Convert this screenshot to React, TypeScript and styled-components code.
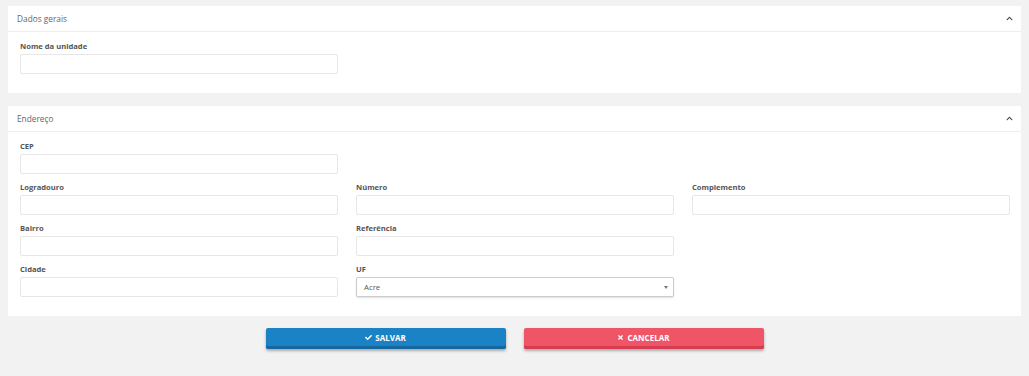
import React from "react";
import styled, {createGlobalStyle} from "styled-components";
import {FaCheck, FaTimes, FaChevronUp} from "react-icons/fa";

const GlobalStyle = createGlobalStyle`
  html, body {
    margin: 0;
    padding: 0;
    background: #f2f2f2;
    font-family: "Open Sans", "Liberation Sans", sans-serif;
  }
`

const Page = styled.div`
  display: flex;
  flex-direction: column;
  gap: 13px;
  padding: 6px 8px 20px 8px;
`

const Panel = styled.section`
  background: #fff;
  display: flex;
  flex-direction: column;
`

const PanelHeader = styled.div`
  display: flex;
  align-items: center;
  justify-content: space-between;
  height: 25px;
  padding: 0 9px;
  border-bottom: 1px solid #eee;
  color: #666;
  font-size: 8.3px;
`

const Toggle = styled.span`
  display: flex;
  color: #444;
  font-size: 7px;
  margin-right: -1px;
`

const PanelBody = styled.div`
  padding: 9px 11px 11px 12px;
`

const Grid = styled.div`
  display: grid;
  grid-template-columns: repeat(3, 318px);
  column-gap: 18px;
`

const Field = styled.div<{$col?: number}>`
  display: flex;
  flex-direction: column;
  grid-column: ${p => p.$col ?? "auto"};
  margin-bottom: 8px;
`

const Label = styled.label`
  font-size: 7.6px;
  line-height: 11px;
  font-weight: 700;
  color: #555;
  margin-bottom: 2px;
`

const Input = styled.input`
  display: block;
  box-sizing: border-box;
  height: 20px;
  width: 100%;
  border: 1px solid #e6e6e6;
  border-radius: 2px;
  background: #fff;
  outline: none;
  padding: 0 8px;
  font-family: inherit;
`

const SelectWrap = styled.div`
  position: relative;
  height: 20px;
`

const Select = styled.select`
  display: block;
  box-sizing: border-box;
  appearance: none;
  width: 100%;
  height: 20px;
  margin: 0;
  border: 1px solid #ccc;
  border-radius: 2px;
  box-shadow: 0 1px 2px rgba(0, 0, 0, 0.12);
  background: #fff;
  padding: 0 7px;
  font-family: inherit;
  font-size: 7.8px;
  color: #555;
  outline: none;
`

const Caret = styled.span`
  position: absolute;
  right: 6px;
  top: 9px;
  width: 0;
  height: 0;
  border-left: 2px solid transparent;
  border-right: 2px solid transparent;
  border-top: 3px solid #777;
  pointer-events: none;
`

const Actions = styled.div`
  display: flex;
  justify-content: center;
  gap: 18px;
  margin-top: -1px;
`

const Button = styled.button<{$bg: string; $edge: string}>`
  display: flex;
  align-items: center;
  justify-content: center;
  gap: 3px;
  width: 240px;
  height: 21px;
  border: none;
  border-radius: 2px;
  background: ${p => p.$bg};
  box-shadow: inset 0 -3px 0 ${p => p.$edge}, 0 2px 3px rgba(0, 0, 0, 0.3);
  color: #fff;
  font-family: inherit;
  font-size: 8px;
  font-weight: 700;
  padding: 0 0 2px 0;
  cursor: pointer;

  svg {
    font-size: 7px;
  }
`

const App = () => {
    return (
        <>
            <GlobalStyle/>
            <Page>
                <Panel>
                    <PanelHeader>
                        Dados gerais
                        <Toggle><FaChevronUp/></Toggle>
                    </PanelHeader>
                    <PanelBody>
                        <Grid>
                            <Field>
                                <Label>Nome da unidade</Label>
                                <Input/>
                            </Field>
                        </Grid>
                    </PanelBody>
                </Panel>

                <Panel>
                    <PanelHeader>
                        Endereço
                        <Toggle><FaChevronUp/></Toggle>
                    </PanelHeader>
                    <PanelBody>
                        <Grid>
                            <Field $col={1}>
                                <Label>CEP</Label>
                                <Input/>
                            </Field>
                            <Field $col={1}>
                                <Label>Logradouro</Label>
                                <Input/>
                            </Field>
                            <Field>
                                <Label>Número</Label>
                                <Input/>
                            </Field>
                            <Field>
                                <Label>Complemento</Label>
                                <Input/>
                            </Field>
                            <Field $col={1}>
                                <Label>Bairro</Label>
                                <Input/>
                            </Field>
                            <Field>
                                <Label>Referência</Label>
                                <Input/>
                            </Field>
                            <Field $col={1}>
                                <Label>Cidade</Label>
                                <Input/>
                            </Field>
                            <Field>
                                <Label>UF</Label>
                                <SelectWrap>
                                    <Select defaultValue="AC">
                                        <option value="AC">Acre</option>
                                    </Select>
                                    <Caret/>
                                </SelectWrap>
                            </Field>
                        </Grid>
                    </PanelBody>
                </Panel>

                <Actions>
                    <Button $bg="#1b82c6" $edge="#15679f"><FaCheck/> SALVAR</Button>
                    <Button $bg="#ef5567" $edge="#d63d50"><FaTimes/> CANCELAR</Button>
                </Actions>
            </Page>
        </>
    )
}
export default App
